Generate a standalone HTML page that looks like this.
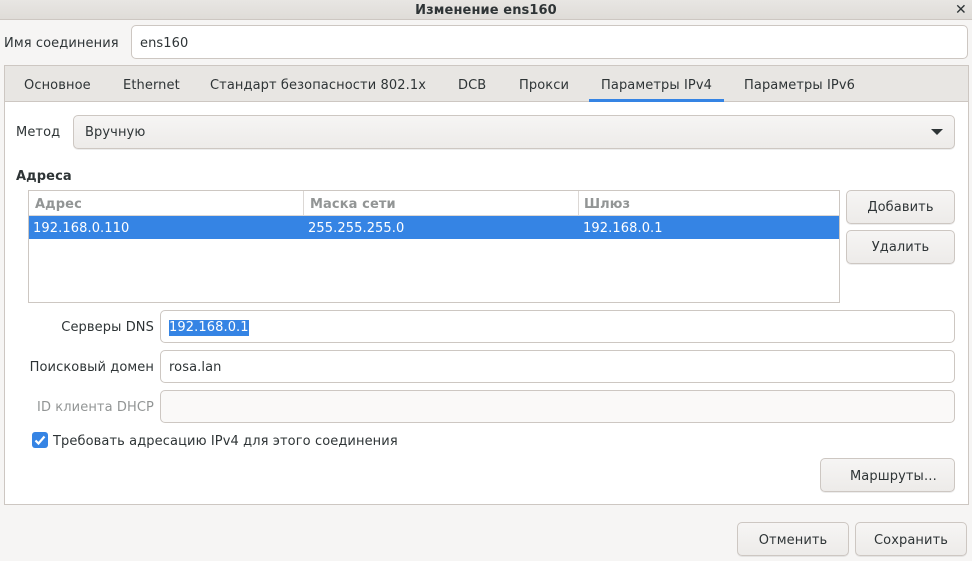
<!DOCTYPE html><html><head><meta charset="utf-8"><style>
*{box-sizing:border-box;margin:0;padding:0}
body{width:972px;height:561px;background:#f6f5f4;font-family:"DejaVu Sans","Liberation Sans",sans-serif;font-size:13px;color:#2e3436;position:relative;overflow:hidden}
.a{position:absolute}
.t{position:absolute;white-space:nowrap;line-height:16px;margin-top:1.5px;letter-spacing:0.1px}
.e{position:absolute;background:#fff;border:1px solid #cdc7c2;border-radius:5px}
.b{position:absolute;border:1px solid #cdc7c2;border-radius:5px;background:linear-gradient(#f6f5f4,#edebe9);text-align:center;box-shadow:0 1px 0 rgba(0,0,0,.07);letter-spacing:0.1px}
</style></head><body>
<div class="a" style="left:0;top:0;width:972px;height:20px;background:linear-gradient(#e8e6e3,#dfdcd8);border-bottom:1px solid #cdc7c2"></div>
<div class="t" style="left:0;width:972px;top:1px;text-align:center;font-weight:bold">Изменение ens160</div>
<div class="t" style="left:955px;top:0px;font-weight:bold;font-size:14px">✕</div>
<div class="t" style="left:4px;top:34px">Имя соединения</div>
<div class="e" style="left:131px;top:25px;width:837px;height:34px"></div>
<div class="t" style="left:140px;top:34px">ens160</div>
<div class="a" style="left:4px;top:65px;width:965px;height:440px;background:#fff;border:1px solid #cdc7c2"></div>
<div class="a" style="left:5px;top:66px;width:963px;height:36px;background:#e8e6e3;border-bottom:1px solid #cdc7c2"></div>
<div class="t" style="left:24px;top:76px">Основное</div>
<div class="t" style="left:123px;top:76px">Ethernet</div>
<div class="t" style="left:210px;top:76px">Стандарт безопасности 802.1x</div>
<div class="t" style="left:458px;top:76px">DCB</div>
<div class="t" style="left:519px;top:76px">Прокси</div>
<div class="t" style="left:601px;top:76px">Параметры IPv4</div>
<div class="t" style="left:744px;top:76px">Параметры IPv6</div>
<div class="a" style="left:589px;top:99px;width:135px;height:3px;background:#3584e4"></div>
<div class="t" style="left:16px;top:123px">Метод</div>
<div class="b" style="left:73px;top:115px;width:882px;height:34px"></div>
<div class="t" style="left:85px;top:123px">Вручную</div>
<div class="a" style="left:931px;top:129px;width:0;height:0;border-left:6px solid transparent;border-right:6px solid transparent;border-top:6px solid #2e3436"></div>
<div class="t" style="left:16px;top:167px;font-weight:bold">Адреса</div>
<div class="a" style="left:28px;top:190px;width:812px;height:113px;border:1px solid #cdc7c2;background:#fff"></div>
<div class="a" style="left:29px;top:191px;width:810px;height:25px;border-bottom:1px solid #dcd8d5"></div>
<div class="a" style="left:303px;top:191px;width:1px;height:25px;background:#dcd8d5"></div>
<div class="a" style="left:578px;top:191px;width:1px;height:25px;background:#dcd8d5"></div>
<div class="t" style="left:35px;top:195px;font-weight:bold;color:#929595">Адрес</div>
<div class="t" style="left:310px;top:195px;font-weight:bold;color:#929595">Маска сети</div>
<div class="t" style="left:584px;top:195px;font-weight:bold;color:#929595">Шлюз</div>
<div class="a" style="left:29px;top:216px;width:810px;height:23px;background:#3584e4"></div>
<div class="t" style="left:33px;top:219px;color:#fff">192.168.0.110</div>
<div class="t" style="left:308px;top:219px;color:#fff">255.255.255.0</div>
<div class="t" style="left:583px;top:219px;color:#fff">192.168.0.1</div>
<div class="b" style="left:846px;top:190px;width:109px;height:34px;padding-top:9px">Добавить</div>
<div class="b" style="left:846px;top:230px;width:109px;height:34px;padding-top:9px">Удалить</div>
<div class="t" style="left:0;width:154px;top:318px;text-align:right">Серверы DNS</div>
<div class="e" style="left:160px;top:310px;width:795px;height:33px"></div>
<div class="t" style="left:169px;top:318px;background:#3584e4;color:#fff">192.168.0.1</div>
<div class="t" style="left:0;width:154px;top:358px;text-align:right">Поисковый домен</div>
<div class="e" style="left:160px;top:350px;width:795px;height:33px"></div>
<div class="t" style="left:169px;top:358px">rosa.lan</div>
<div class="t" style="left:0;width:154px;top:398px;text-align:right;color:#929595">ID клиента DHCP</div>
<div class="e" style="left:160px;top:390px;width:795px;height:33px;background:#faf9f8"></div>
<div class="a" style="left:32px;top:432px;width:16px;height:16px;border-radius:3px;background:#3584e4"></div>
<svg class="a" style="left:32px;top:432px" width="16" height="16"><path d="M3.5 8.5l3 3 6-7" stroke="#fff" stroke-width="2.2" fill="none"/></svg>
<div class="t" style="left:53px;top:432px">Требовать адресацию IPv4 для этого соединения</div>
<div class="b" style="left:820px;top:458px;width:135px;height:34px;padding-top:10px;padding-left:12px">Маршруты…</div>
<div class="b" style="left:737px;top:522px;width:112px;height:34px;padding-top:10px">Отменить</div>
<div class="b" style="left:855px;top:522px;width:112px;height:34px;padding-top:10px">Сохранить</div>
</body></html>
